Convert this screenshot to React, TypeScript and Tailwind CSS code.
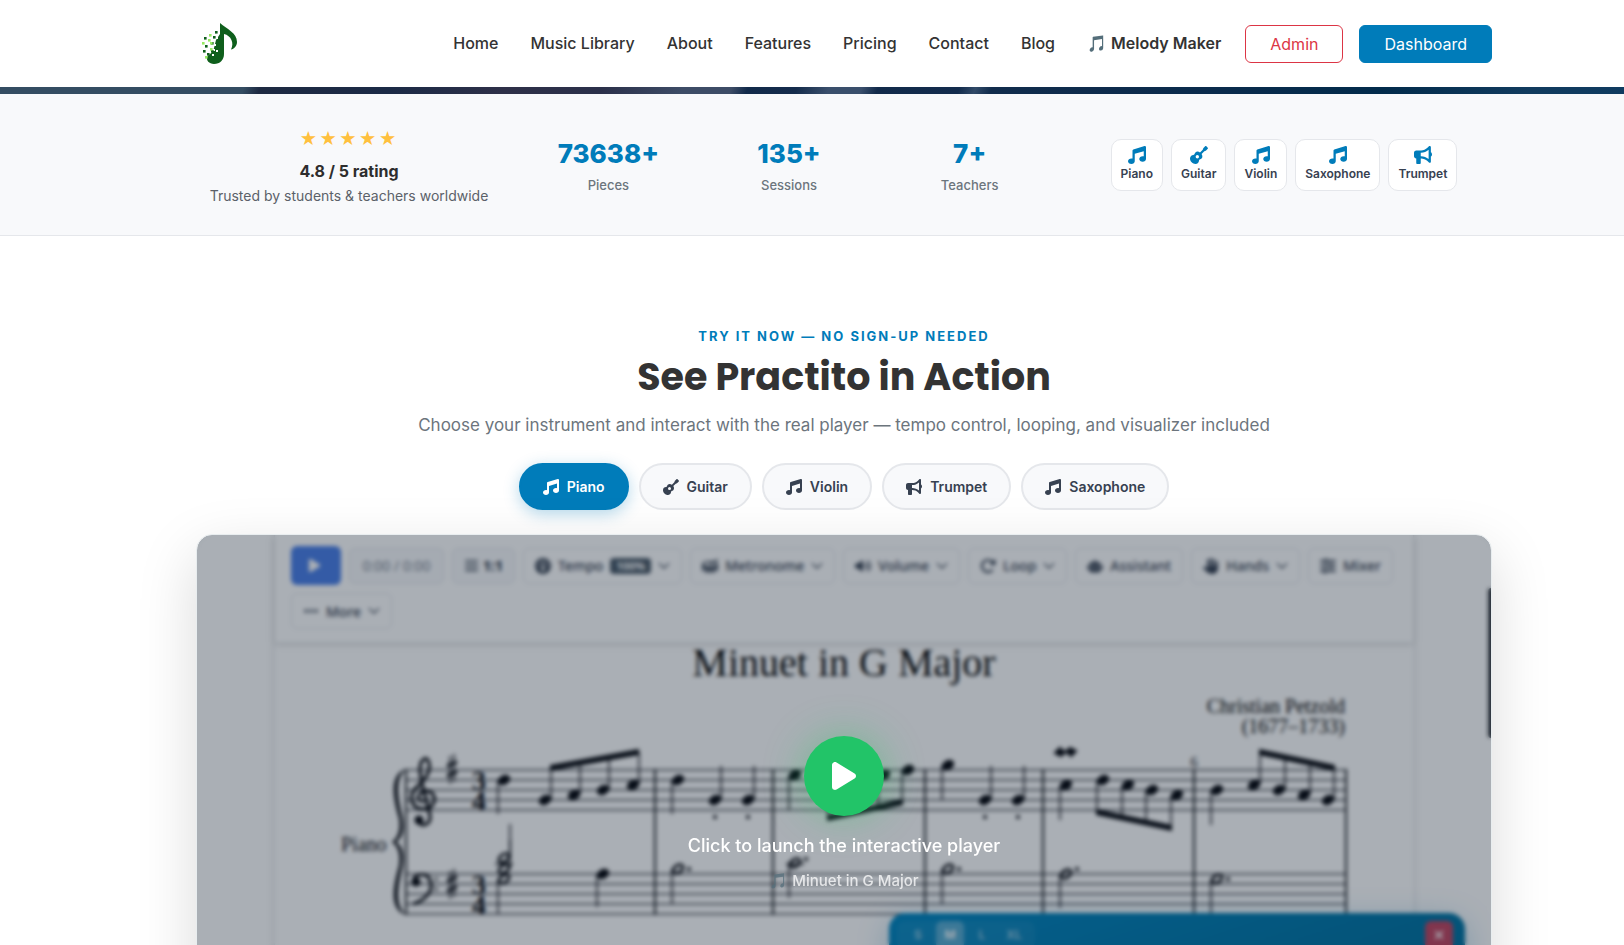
import type { ReactNode } from "react";
import type { IconType } from "react-icons";
import {
  FaBars,
  FaBullhorn,
  FaDrum,
  FaEllipsis,
  FaGauge,
  FaGuitar,
  FaHand,
  FaMusic,
  FaPlay,
  FaRobot,
  FaRotateRight,
  FaSliders,
  FaVolumeHigh,
  FaXmark,
} from "react-icons/fa6";
import { BsChevronDown } from "react-icons/bs";

const navLinks = ["Home", "Music Library", "About", "Features", "Pricing", "Contact", "Blog"];

const stats = [
  { value: "73638+", label: "Pieces" },
  { value: "135+", label: "Sessions" },
  { value: "7+", label: "Teachers" },
];

const instruments: { name: string; icon: IconType }[] = [
  { name: "Piano", icon: FaMusic },
  { name: "Guitar", icon: FaGuitar },
  { name: "Violin", icon: FaMusic },
  { name: "Saxophone", icon: FaMusic },
  { name: "Trumpet", icon: FaBullhorn },
];

const demoTabs: { name: string; icon: IconType }[] = [
  { name: "Piano", icon: FaMusic },
  { name: "Guitar", icon: FaGuitar },
  { name: "Violin", icon: FaMusic },
  { name: "Trumpet", icon: FaBullhorn },
  { name: "Saxophone", icon: FaMusic },
];

const logoDark = [
  [19, 11], [8, 17], [17, 16], [9, 25], [7, 30], [11, 33], [15, 30], [15, 22],
];
const logoLight = [
  [13, 14], [12, 19], [6, 22], [14, 22], [14, 28], [9, 36],
];
const logoHoles = [
  [20, 17], [18, 24], [17, 29], [20, 30], [16, 34],
];

function Logo() {
  return (
    <svg className="w-12 h-12" viewBox="0 0 48 48">
      <path
        d="M24 3 C31 9 41 13 41 22 C41 26 38 29 35 29.5 C38.5 23 35 15.5 28 14 V34 C28 40 24 44 18 44 C13 44 10 40 11 37 C13 34 17 33 18 28 L20 20 L24 14 Z"
        fill="#0f5f1c"
      />
      {logoHoles.map(([x, y]) => (
        <rect key={`${x}-${y}`} x={x} y={y} width="2" height="2" fill="#fff" />
      ))}
      {logoDark.map(([x, y]) => (
        <rect key={`${x}-${y}`} x={x} y={y} width="2.6" height="2.6" fill="#0f5f1c" />
      ))}
      {logoLight.map(([x, y]) => (
        <rect key={`${x}-${y}`} x={x} y={y} width="2.6" height="2.6" fill="#97ea63" />
      ))}
    </svg>
  );
}

function Header() {
  return (
    <header className="bg-white pl-16">
      <div className="max-w-[1320px] mx-auto h-[87px] px-3 flex items-center justify-between">
        <a href="#" aria-label="Practito">
          <Logo />
        </a>
        <div className="flex items-center gap-6">
          <nav className="flex items-center gap-8 pb-[2px] text-[16px] font-medium text-[#333]">
            {navLinks.map((link) => (
              <a key={link} href="#">
                {link}
              </a>
            ))}
            <a href="#" className="font-semibold">
              🎵 Melody Maker
            </a>
          </nav>
          <div className="flex items-center gap-4">
            <button className="h-[38px] px-6 rounded-md border border-[#dc3545] text-[#dc3545]">Admin</button>
            <button className="h-[38px] px-6 rounded-md border border-[#007cba] bg-[#007cba] text-white">
              Dashboard
            </button>
          </div>
        </div>
      </div>
    </header>
  );
}

function StatsBar() {
  return (
    <section className="bg-[#f8f9fb] border-b border-[#e5e7eb] pl-16">
      <div className="max-w-[1320px] mx-auto py-7 flex items-center">
        <div className="w-1/4 text-center">
          <div className="text-[17px] leading-[34px] tracking-[2px] text-[#ffc03d]">★★★★★</div>
          <div className="text-[16px] leading-[30px] font-bold text-[#2d2d2d]">4.8 / 5 rating</div>
          <div className="pb-[2px] text-[14px] leading-[19px] text-[#5b6169]">
            Trusted by students & teachers worldwide
          </div>
        </div>
        <div className="w-5/12 px-3 grid grid-cols-3 gap-4 text-center">
          {stats.map((stat) => (
            <div key={stat.label}>
              <div className="text-[26px] leading-9 font-extrabold text-[#007cba]">{stat.value}</div>
              <div className="mt-1 text-[13px] leading-[18px] font-medium text-[#6c757d]">{stat.label}</div>
            </div>
          ))}
        </div>
        <div className="w-1/3 px-3 flex justify-center gap-2">
          {instruments.map(({ name, icon: Icon }) => (
            <div
              key={name}
              className="flex flex-col items-center px-[9px] py-[6px] rounded-[10px] bg-white border border-[#e5e7eb]"
            >
              <Icon className="w-[18px] h-[18px] text-[#007cba]" />
              <span className="text-[12px] leading-5 font-semibold text-[#374151]">{name}</span>
            </div>
          ))}
        </div>
      </div>
    </section>
  );
}

type ToolButtonProps = {
  icon: IconType;
  label: string;
  menu?: boolean;
  children?: ReactNode;
};

function ToolButton({ icon: Icon, label, menu, children }: ToolButtonProps) {
  return (
    <button className="h-9 px-[11px] flex items-center gap-[7px] rounded-md border border-[#e2e5ea] text-[14px] font-medium text-[#374151]">
      <Icon className="w-4 h-4" />
      {label}
      {children}
      {menu && <BsChevronDown className="w-3 h-3" strokeWidth={1} />}
    </button>
  );
}

function Toolbar() {
  return (
    <div
      className="px-4 pt-[11px] min-h-[108px] flex flex-wrap items-center content-start gap-x-2 gap-y-2 border-b border-[#e5e7eb] shadow-[0_2px_6px_rgba(0,0,0,0.12)]"
      style={{ fontFamily: '"Noto Sans", sans-serif' }}
    >
      <button aria-label="Play" className="w-[50px] h-[39px] pr-1 flex items-center justify-center rounded-md bg-[#4a7fe8] text-white">
        <FaPlay className="w-[15px] h-[15px]" />
      </button>
      <div className="w-[95px] h-9 flex items-center justify-center rounded-md border border-[#e2e5ea] bg-[#f8f9fb] text-[14px] text-[#7b8490]">
        0:00 / 0:00
      </div>
      <button className="w-[63px] h-9 flex items-center justify-center gap-1 rounded-md border border-[#e2e5ea] bg-[#f8f9fb] text-[14px] font-bold text-[#1f2937]">
        <FaBars className="w-[15px] h-[15px] text-[#4b5563]" />
        1:1
      </button>
      <ToolButton icon={FaGauge} label="Tempo" menu>
        <span className="px-[6px] py-[2px] rounded bg-[#4b5a68] text-[11px] leading-3 font-bold text-white">100%</span>
      </ToolButton>
      <ToolButton icon={FaDrum} label="Metronome" menu />
      <ToolButton icon={FaVolumeHigh} label="Volume" menu />
      <ToolButton icon={FaRotateRight} label="Loop" menu />
      <ToolButton icon={FaRobot} label="Assistant" />
      <ToolButton icon={FaHand} label="Hands" menu />
      <ToolButton icon={FaSliders} label="Mixer" />
      <ToolButton icon={FaEllipsis} label="More" menu />
    </div>
  );
}

const INK = "#05070d";

// Filled note heads: x, y, stem x offset, stem end y
const quarterNotes: [number, number, number, number][] = [
  [504, 780, -6, 814],
  [545, 800, 6, 768],
  [574, 795, 6, 763],
  [603, 790, 6, 758],
  [633, 785, 6, 752],
  [678, 780, -6, 814],
  [715, 800, 6, 766],
  [748, 800, 6, 766],
  [795, 775, -6, 810],
  [834, 790, -6, 818],
  [859, 782, -6, 813],
  [884, 775, -6, 807],
  [908, 770, -6, 802],
  [948, 765, -6, 800],
  [985, 800, 6, 766],
  [1018, 800, 6, 766],
  [1066, 785, -6, 820],
  [1103, 780, -6, 812],
  [1128, 785, -6, 817],
  [1152, 790, -6, 822],
  [1177, 795, -6, 828],
  [1217, 790, -6, 825],
  [1254, 785, 6, 752],
  [1279, 790, 6, 757],
  [1304, 795, 6, 762],
  [1328, 800, 6, 768],
  [603, 874, -6, 907],
];

const halfNotes: [number, number, number, number][] = [
  [504, 858, 6, 824],
  [504, 869, 6, 840],
  [504, 879, -6, 914],
  [678, 869, -6, 904],
  [795, 863, -6, 898],
  [948, 869, -6, 904],
  [1066, 874, -6, 908],
  [1217, 879, -6, 914],
];

const dots = [
  [715, 817], [748, 817], [985, 817], [1018, 817],
  [689, 869], [806, 859], [959, 869], [1077, 869], [1228, 879],
];

const beams = [
  "M550 765 L639 749 V755 L550 771 Z",
  "M827 815 L903 799 V805 L827 821 Z",
  "M1096 809 L1172 825 V831 L1096 815 Z",
  "M1259 749 L1335 765 V771 L1259 755 Z",
];

function Score() {
  return (
    <svg className="block w-full" viewBox="275 736 1138 194" fontFamily="Liberation Serif, serif" fill={INK}>
      {[770, 780, 790, 800, 810, 874, 884, 894, 904, 914].map((y) => (
        <path key={y} d={`M406 ${y} H1346`} stroke="#3f434b" strokeWidth="1.3" />
      ))}
      {[406, 655, 773, 925, 1043, 1194, 1346].map((x) => (
        <path key={x} d={`M${x} 769 V915`} stroke={INK} strokeWidth="1.8" />
      ))}
      <path d="M406 769 C388 775 394 800 399 818 C401 830 398 838 392 842 C398 846 401 854 399 866 C394 884 388 909 406 915 C394 905 398 886 402 868 C405 854 402 846 396 842 C402 838 405 830 402 816 C398 798 394 779 406 769 Z" />
      {/* treble clef */}
      <path
        d="M424 801 C416 803 416 792 426 791 C438 791 437 809 424 809 C409 809 409 794 417 787 C426 779 431 771 429 763 C427 754 420 760 420 769 C420 782 428 803 430 816 C431 825 421 828 417 821"
        fill="none"
        stroke={INK}
        strokeWidth="3"
      />
      <circle cx="419" cy="820" r="4.5" />
      {/* bass clef */}
      <path d="M413 904 C428 899 434 889 430 880 C427 872 415 873 413 881" fill="none" stroke={INK} strokeWidth="3" />
      <circle cx="416" cy="882" r="4.5" />
      <circle cx="436" cy="879" r="1.5" />
      <circle cx="436" cy="889" r="1.5" />
      {/* key signature */}
      {[769, 884].map((y) => (
        <g key={y} stroke={INK}>
          <path d={`M450 ${y - 13} V${y + 15} M454 ${y - 15} V${y + 13}`} strokeWidth="1.4" />
          <path d={`M447 ${y - 3} L457 ${y - 7} M447 ${y + 7} L457 ${y + 3}`} strokeWidth="3" />
        </g>
      ))}
      <g fontSize="28" fontWeight="bold" textAnchor="middle">
        <text x="479" y="790">3</text>
        <text x="479" y="810">4</text>
        <text x="479" y="894">3</text>
        <text x="479" y="914">4</text>
      </g>
      {quarterNotes.map(([x, y, dx, end]) => (
        <g key={`${x}-${y}`}>
          <ellipse cx={x} cy={y} rx="6.5" ry="4.8" transform={`rotate(-28 ${x} ${y})`} />
          <path d={`M${x + dx} ${y} V${end}`} stroke={INK} strokeWidth="1.4" />
        </g>
      ))}
      {halfNotes.map(([x, y, dx, end]) => (
        <g key={`${x}-${y}`} stroke={INK}>
          <ellipse cx={x} cy={y} rx="5.6" ry="3.6" transform={`rotate(-35 ${x} ${y})`} fill="none" strokeWidth="2.8" />
          <path d={`M${x + dx} ${y} V${end}`} strokeWidth="1.4" />
        </g>
      ))}
      <path d="M495 864 H513 M786 864 H804" stroke={INK} strokeWidth="1.3" />
      {dots.map(([x, y]) => (
        <circle key={`${x}-${y}`} cx={x} cy={y} r="2" />
      ))}
      {beams.map((d) => (
        <path key={d} d={d} />
      ))}
      {/* mordent */}
      <path d="M1055 753 L1060 748 L1065 753 L1070 748 L1076 751 L1071 756 L1066 751 L1061 756 Z" stroke={INK} strokeWidth="2" />
      <text x="1194" y="767" fontSize="14" textAnchor="middle">6</text>
      <text x="341" y="851" fontSize="20">Piano</text>
    </svg>
  );
}

function FloatingPanel() {
  return (
    <div className="absolute top-[378px] right-[26px] w-[576px] h-48 rounded-2xl bg-linear-to-br from-[#0086c2] to-[#006287] shadow-[0_8px_32px_rgba(0,124,186,0.3)] pt-2 pl-2 pr-3 flex items-start justify-between">
      <div className="flex gap-1 rounded-lg bg-white/5 px-[7px] text-[12px] font-semibold text-white/60">
        <button className="w-7 h-7">S</button>
        <button className="w-7 h-7 rounded-md bg-white/30 text-white">M</button>
        <button className="w-7 h-7">L</button>
        <button className="w-7 h-7">XL</button>
      </div>
      <button aria-label="Close" className="w-7 h-7 flex items-center justify-center rounded-md bg-[#c04460] text-white">
        <FaXmark className="w-[14px] h-[14px]" />
      </button>
    </div>
  );
}

function PlayerPreview() {
  return (
    <div className="relative mt-6 h-[561px] overflow-hidden rounded-2xl border border-[#e8edef] bg-white shadow-[0_20px_60px_rgba(0,0,0,0.15)]">
      <div className="mx-[77px] h-full border-x border-[#eceef1] shadow-[0_0_8px_rgba(0,0,0,0.1)]">
        <Toolbar />
        <div className="text-black" style={{ fontFamily: '"Liberation Serif", serif' }}>
          <h3 className="text-center text-[40px] leading-10">Minuet in G Major</h3>
          <p className="mt-[13px] pr-[68px] text-right text-[20px] leading-5">
            Christian Petzold
            <br />
            (1677–1733)
          </p>
          <Score />
        </div>
      </div>
      <div className="absolute top-[53px] right-0 w-[3px] h-[150px] rounded-l bg-[#2f3338]" />
      <FloatingPanel />

      <div className="absolute inset-0 flex flex-col items-center justify-center bg-[#0c1a2a]/35 backdrop-blur-[2px]">
        <button
          aria-label="Launch player"
          className="w-20 h-20 flex items-center justify-center rounded-full bg-[#22c468] text-white shadow-[0_0_40px_rgba(34,197,94,0.4)]"
        >
          <FaPlay className="w-7 h-8" />
        </button>
        <p className="mt-4 text-[18px] leading-[27px] font-medium text-white">Click to launch the interactive player</p>
        <p className="mt-[9px] text-[15px] leading-[26px] font-medium text-white opacity-75">🎵 Minuet in G Major</p>
      </div>
    </div>
  );
}

function DemoSection() {
  return (
    <section className="bg-white pl-16">
      <div className="max-w-[1320px] mx-auto px-3 pt-[90px]">
        <div className="text-center">
          <p className="text-[13px] leading-5 font-bold tracking-[2px] text-[#007cba] uppercase">
            Try it now — no sign-up needed
          </p>
          <h2
            className="mt-2 text-[38px] leading-[46px] font-bold text-[#333]"
            style={{ fontFamily: "Poppins, Inter, sans-serif" }}
          >
            See Practito in Action
          </h2>
          <p className="mt-[11px] text-[17px] leading-7 text-[#6c757d]">
            Choose your instrument and interact with the real player — tempo control, looping, and visualizer included
          </p>
        </div>
        <div className="mt-6 flex justify-center gap-[10px]">
          {demoTabs.map(({ name, icon: Icon }, i) => (
            <button
              key={name}
              className={`h-[47px] px-[22px] flex items-center gap-2 rounded-full border-2 text-[14px] font-semibold ${
                i === 0
                  ? "border-[#007cba] bg-[#007cba] text-white shadow-[0_4px_16px_rgba(0,124,186,0.3)]"
                  : "border-[#e5e7eb] bg-[#f8f9fb] text-[#374151]"
              }`}
            >
              <Icon className="w-4 h-4" />
              {name}
            </button>
          ))}
        </div>
        <PlayerPreview />
      </div>
    </section>
  );
}

export default function App() {
  return (
    <div className="h-screen overflow-hidden bg-white" style={{ fontFamily: "Inter, sans-serif" }}>
      <Header />
      {/* Bottom edge of the hero photo */}
      <div className="h-[7px] bg-[linear-gradient(110deg,#344d62_0%,#344d62_15%,#1e2a42_16%,#1b2a46_24%,#2e3048_31%,#2b304a_37%,#3d4c66_42%,#3d4c66_45%,#122a4a_46%,#152c4c_49%,#3a4f6c_51%,#3a4f6c_53%,#122a4a_54%,#132c4d_59%,#314a68_60%,#112c4c_61%,#0a2b4c_75%,#022b4b_85%,#113b5e_94%,#0f3b60_100%)]" />
      <StatsBar />
      <DemoSection />
    </div>
  );
}
